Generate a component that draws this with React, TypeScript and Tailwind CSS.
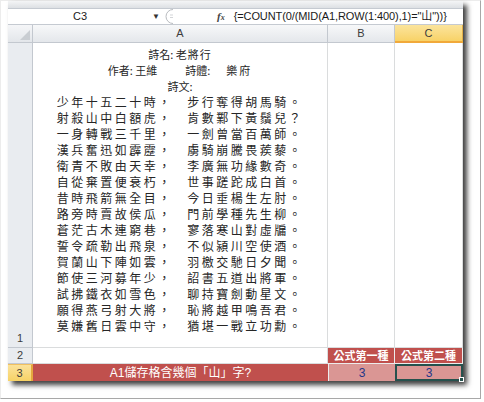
import React from "react";

const poem = [
  "少年十五二十時，　步行奪得胡馬騎。",
  "射殺山中白額虎，　肯數鄴下黃鬚兒？",
  "一身轉戰三千里，　一劍曾當百萬師。",
  "漢兵奮迅如霹靂，　虜騎崩騰畏蒺藜。",
  "衛青不敗由天幸，　李廣無功緣數奇。",
  "自從棄置便衰朽，　世事蹉跎成白首。",
  "昔時飛箭無全目，　今日垂楊生左肘。",
  "路旁時賣故侯瓜，　門前學種先生柳。",
  "蒼茫古木連窮巷，　寥落寒山對虛牖。",
  "誓令疏勒出飛泉，　不似潁川空使酒。",
  "賀蘭山下陣如雲，　羽檄交馳日夕聞。",
  "節使三河募年少，　詔書五道出將軍。",
  "試拂鐵衣如雪色，　聊持寶劍動星文。",
  "願得燕弓射大將，　恥將越甲鳴吾君。",
  "莫嫌舊日雲中守，　猶堪一戰立功勳。",
];

export default function App() {
  return (
    <div
      lang="zh-Hant"
      className="h-[402px] w-[484px] overflow-hidden bg-white font-['Liberation_Sans','Noto_Sans_CJK_TC',sans-serif]"
    >
      {/* picture frame */}
      <div className="h-[399px] w-[481px] border border-[#ececec] border-r-[#a8a8a8] border-b-[#a8a8a8] bg-white">
        {/* excel window */}
        <div className="ml-[7px] flex h-[380px] w-[455px] flex-col bg-white shadow-[4px_4px_5px_rgba(0,0,0,0.75)]">
          {/* ribbon bottom edge */}
          <div className="h-[7px] bg-gradient-to-b from-[#f4f5f6] to-[#dde0e4]" />

          {/* formula bar */}
          <div className="flex h-[17px] items-center border-t border-b border-[#c5cad1] bg-white text-[11px] text-[#1a1a1a]">
            <div className="w-[144px] text-center">C3</div>
            <span className="w-[10px] text-[8px] text-[#333]">▼</span>
            <svg width="16" height="15" viewBox="0 0 16 15" className="ml-[1px]">
              <path d="M10 0.5 A7 7 0 0 0 10 14.5" fill="none" stroke="#b9bcc0" strokeWidth="1" />
              <path d="M7 6 H10 M7 8.5 H10" stroke="#d3d5d8" strokeWidth="1" />
            </svg>
            <span className="ml-[38px] font-['Liberation_Serif'] text-[11px] font-bold italic text-[#444]">
              f<span className="text-[8px]">x</span>
            </span>
            <span className="ml-[9px] tracking-[-0.1px]">{'{=COUNT(0/(MID(A1,ROW(1:400),1)="山"))}'}</span>
          </div>

          {/* sheet grid */}
          <div className="grid grid-cols-[25px_295px_67px_68px] grid-rows-[18px_305px_16px_17px]">
            {/* header row */}
            <div className="relative border-r border-b border-[#c3c8cf] bg-gradient-to-b from-[#f5f6f8] to-[#e3e6ea]">
              <svg width="10" height="10" viewBox="0 0 10 10" className="absolute right-[2px] bottom-[2px]">
                <path d="M10 0 L10 10 L0 10 Z" fill="#c9cdd2" />
              </svg>
            </div>
            <div className="flex items-center justify-center border-r border-b border-[#c3c8cf] bg-gradient-to-b from-[#f7f8f9] to-[#e4e7eb] text-[11px] text-[#3c3c3c]">
              A
            </div>
            <div className="flex items-center justify-center border-r border-b border-[#c3c8cf] bg-gradient-to-b from-[#f7f8f9] to-[#e4e7eb] text-[11px] text-[#3c3c3c]">
              B
            </div>
            <div className="flex items-center justify-center border-r border-b-2 border-r-[#e2b04a] border-b-[#f1a93a] bg-gradient-to-b from-[#fbe49c] to-[#f8d266] text-[11px] text-[#3c3c3c]">
              C
            </div>

            {/* row 1 */}
            <div className="flex items-end justify-center border-r border-b border-[#c3c8cf] bg-[#e9ecf0] pb-[1px] text-[11px] text-[#3c3c3c]">
              1
            </div>
            <div className="border-r border-b border-[#dadcdd] pt-[3px] text-center font-['Noto_Sans_CJK_TC',sans-serif] leading-[16px] text-[#262626]">
              <div className="text-[11px]">
                詩名: <span className="tracking-[1px]">老將行</span>
              </div>
              <div className="text-[11px]">
                作者: 王維<span className="ml-[28px]">詩體:</span>
                <span className="ml-[16px] tracking-[2px]">樂府</span>
              </div>
              <div className="text-[11px]">詩文:</div>
              {poem.map((line) => (
                <div key={line} className="text-[12px] tracking-[2.5px]">
                  {line}
                </div>
              ))}
            </div>
            <div className="border-r border-b border-[#dadcdd]" />
            <div className="border-r border-b border-[#dadcdd]" />

            {/* row 2 */}
            <div className="flex items-end justify-center border-r border-b border-[#c3c8cf] bg-[#e9ecf0] text-[11px] text-[#3c3c3c]">
              2
            </div>
            <div className="border-r border-b border-[#dadcdd]" />
            <div className="flex items-center justify-center border-r border-b border-[#ececec] bg-[#c0504d] font-['Noto_Sans_CJK_TC',sans-serif] text-[11px] font-bold text-white">
              公式第一種
            </div>
            <div className="flex items-center justify-center border-r border-b border-[#ececec] bg-[#c0504d] font-['Noto_Sans_CJK_TC',sans-serif] text-[11px] font-bold text-white">
              公式第二種
            </div>

            {/* row 3 */}
            <div className="flex items-center justify-center border-r-2 border-t border-[#e4a63e] border-t-[#f0c060] bg-gradient-to-b from-[#fbe29a] to-[#f7d264] text-[11px] text-[#3c3c3c]">
              3
            </div>
            <div className="flex items-center justify-center bg-[#c0504d] text-[12px] text-white">
              A1儲存格含幾個「山」字?
            </div>
            <div className="flex items-center justify-center border-l border-[#ececec] bg-[#da9694] text-[12px] text-[#24378a]">
              3
            </div>
            <div className="relative flex items-center justify-center border-2 border-[#25514d] bg-[#da9694] text-[12px] text-[#24378a]">
              3
              <span className="absolute right-[-3px] bottom-[-3px] h-[5px] w-[5px] border border-white bg-[#25514d]" />
            </div>
          </div>
        </div>
      </div>
    </div>
  );
}
